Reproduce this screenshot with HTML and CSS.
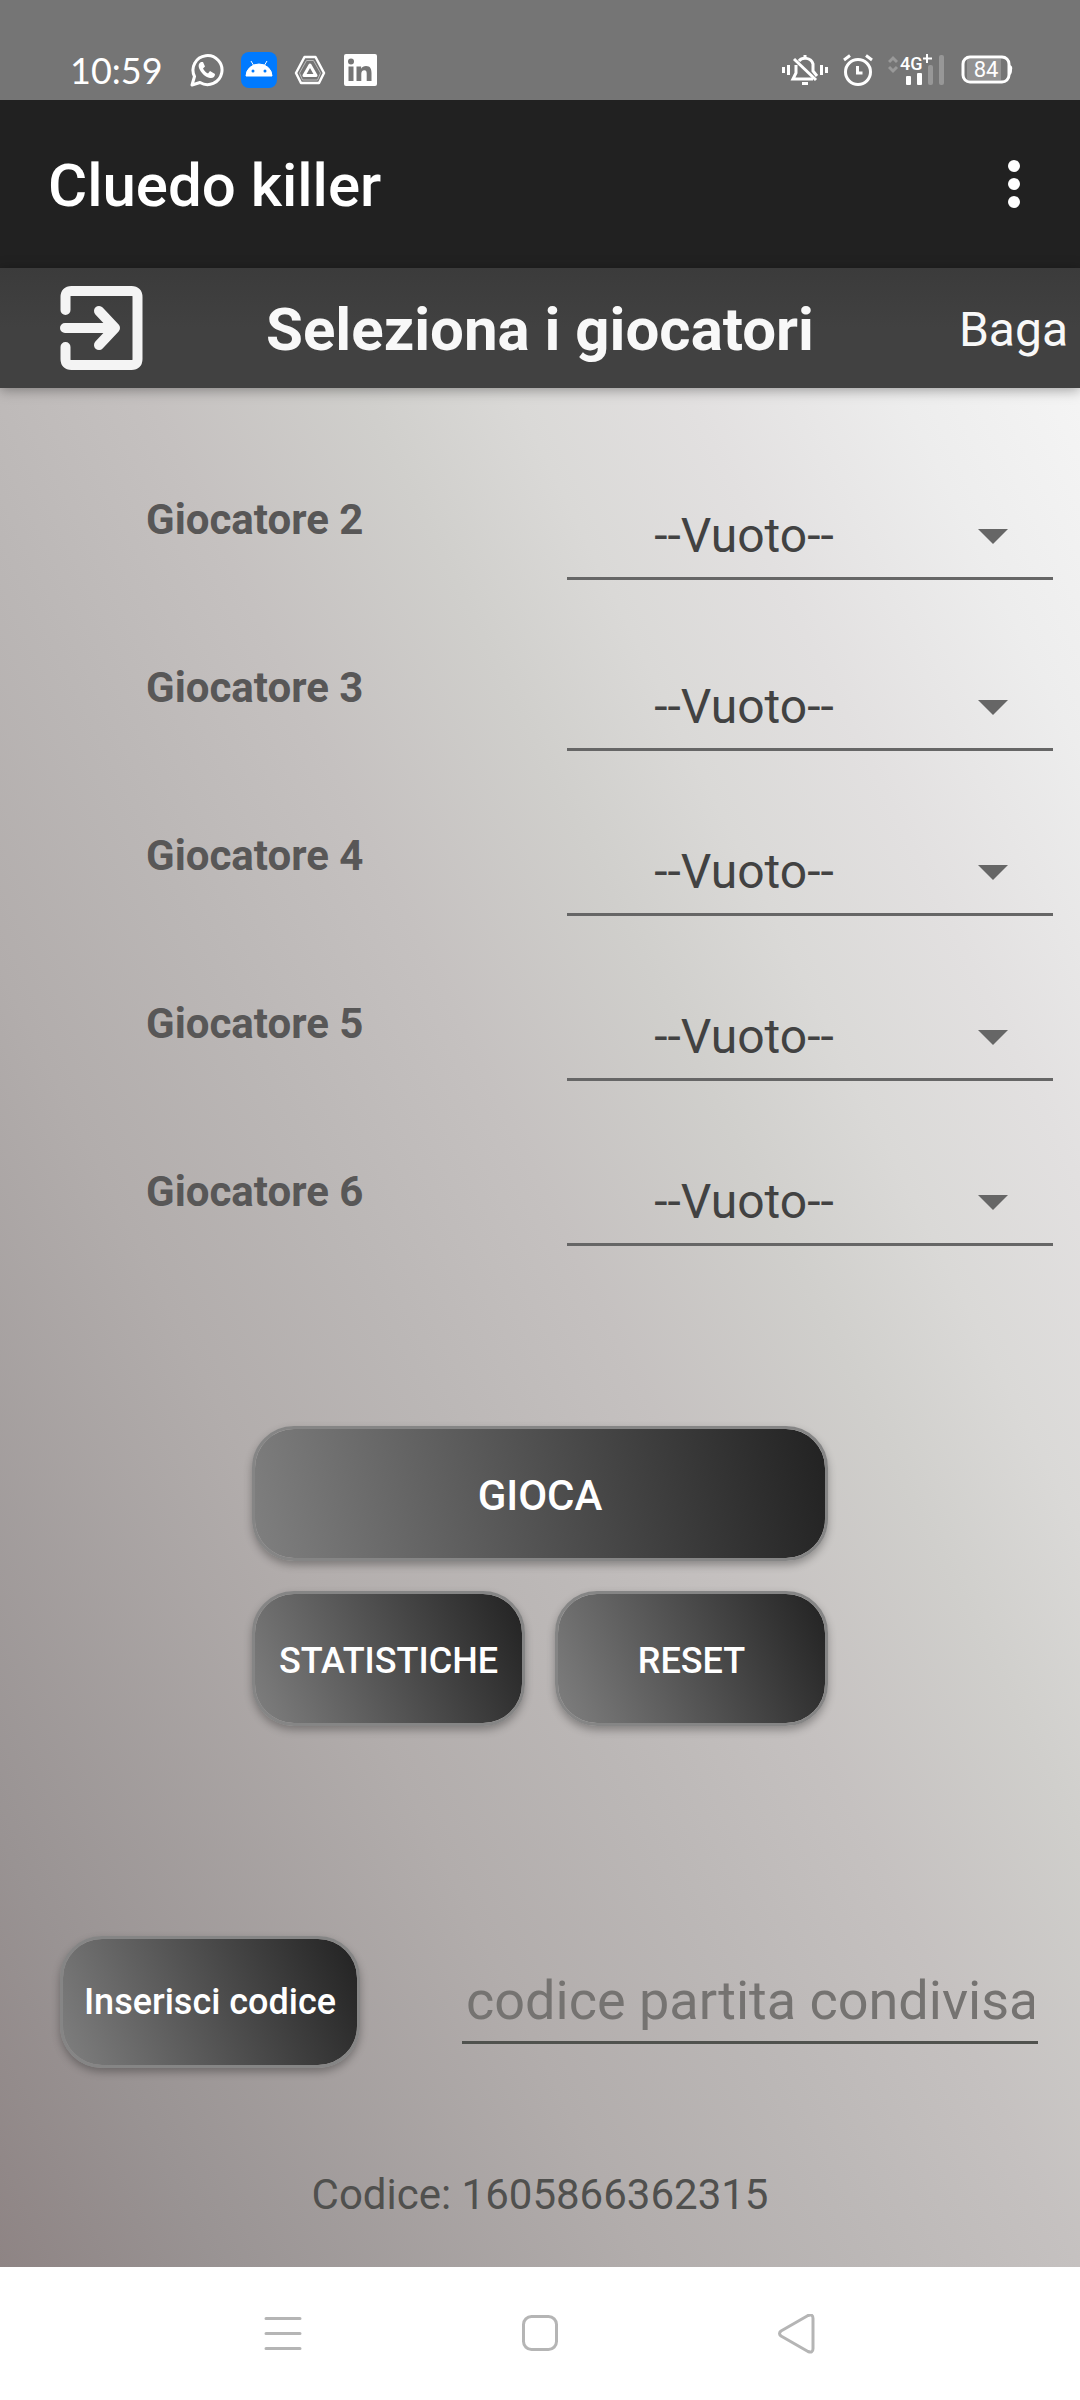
FILE: index.html
```html
<!DOCTYPE html>
<html lang="it">
<head>
<meta charset="utf-8">
<meta name="viewport" content="width=device-width, initial-scale=1">
<title>Cluedo killer</title>
<link rel="stylesheet" href="styles.css">
</head>
<body>
<div class="status">
  <div class="status-group">
    <span class="clock">10:59</span>
    <svg width="34" height="34" viewBox="0 0 34 34" fill="none"><path d="M2 32l2.500-8.500A14.500 14.500 0 1 1 10 29.500z" stroke="#fff" stroke-width="3" stroke-linejoin="round"/><path d="M11 9c-2 1-3 3-2 6 2 5 6 9 11 10 3 .5 5-1 5-4l-5-3-2 2.500c-2-.8-4-3-5-5l2-2-2-4.500z" fill="#fff"/></svg>
    <svg width="36" height="36" viewBox="0 0 36 36"><rect width="36" height="36" rx="8" fill="#007aff"/><path d="M5 24a13 12 0 0 1 26 0zM10 9l3 5M26 9l-3 5" fill="#fff" stroke="#fff" stroke-width="1"/><circle cx="12" cy="19" r="1.500" fill="#007aff"/><circle cx="24" cy="19" r="1.500" fill="#007aff"/></svg>
    <svg width="32" height="30" viewBox="0 0 32 30" fill="none" stroke="#fff" stroke-linejoin="round"><path d="M10.500 2h11L30 18l-5 10H7L2 18z" stroke-width="2.500"/><path d="M16 10l6 10.500H10z" stroke-width="3"/><path d="M12.500 5.500h7L26.500 18l-3 7h-15l-3-7z" stroke="#bbb" stroke-width="1"/></svg>
    <svg width="34" height="34" viewBox="0 0 34 34"><rect x="1" y="1" width="33" height="32" rx="2" fill="#fff"/><g fill="#757575"><circle cx="8" cy="8.500" r="3"/><path d="M5.500 13.500h5V28h-5zM13.500 13.500h4.600v2.200c1-1.700 2.700-2.600 4.900-2.600 4.300 0 5.500 2.800 5.500 7V28h-4.800v-7.200c0-2-.3-3.600-2.400-3.600s-3 1.600-3 3.600V28h-4.800z"/></g></svg>
  </div>
  <div class="status-group status-right">
    <svg width="46" height="32" viewBox="0 0 46 32" fill="none" stroke="#fff" stroke-width="3"><path d="M1.500 13v6M6.500 11v10M39.500 11v10M44.500 13v6"/><path d="M17 7c3-4 12-4 14 3v7l4 5M14 11v8l-3 6h20" /><path d="M12 5l22 21"/><path d="M23 1v3M20 29.500h6"/></svg>
    <svg width="30" height="32" viewBox="0 0 30 32" fill="none" stroke="#fff" stroke-width="3"><circle cx="15" cy="18" r="12.500"/><path d="M1 6l6-4.500M29 6l-6-4.500M14.500 12v7h5"/></svg>
    <svg width="58" height="32" viewBox="0 0 58 32"><path d="M1 8l4-4 4 4M1 13l4 4 4-4" fill="none" stroke="#999" stroke-width="3"/><text x="12" y="16" class="net">4G</text><path d="M39 0v9M35 4.500h9" stroke="#fff" stroke-width="2"/><rect x="18" y="22" width="5" height="9" rx="1" fill="#fff"/><rect x="29" y="19" width="5" height="12" rx="1" fill="#fff"/><rect x="40" y="11" width="5" height="20" rx="2" fill="#979797"/><rect x="51" y="1" width="5" height="30" rx="2" fill="#979797"/></svg>
    <svg width="52" height="30" viewBox="0 0 52 30"><rect x="6" y="4" width="34" height="21" fill="#929292"/><rect x="2" y="2" width="46" height="25" rx="7" fill="none" stroke="#fff" stroke-width="3"/><path d="M49 10q3 1 2 5 0 4-2 5z" fill="#fff"/><text x="25" y="22" text-anchor="middle" class="bat">84</text></svg>
  </div>
</div>
<header class="appbar">
  <h1>Cluedo killer</h1>
  <button class="more" aria-label="Altre opzioni"><svg width="12" height="48" viewBox="0 0 12 48" fill="#fff"><circle cx="6" cy="6" r="6"/><circle cx="6" cy="24" r="6"/><circle cx="6" cy="42" r="6"/></svg></button>
</header>
<nav class="subbar">
  <button class="enter" aria-label="Esci"><svg width="84" height="86" viewBox="0 0 84 86" fill="none" stroke="#f4f4f4" stroke-width="10" stroke-linecap="round" stroke-linejoin="round"><path d="M5.500 25V12q0-6 6-6h60q6 0 6 6v62q0 6-6 6h-60q-6 0-6-6V62M5 43h49M39 26l16 17-16 17"/></svg></button>
  <h2>Seleziona i giocatori</h2>
  <a href="#" class="user">Baga</a>
</nav>
<main class="content">
  <section class="players">
    <div class="labels">
      <label for="p2">Giocatore 2</label>
      <label for="p3">Giocatore 3</label>
      <label for="p4">Giocatore 4</label>
      <label for="p5">Giocatore 5</label>
      <label for="p6">Giocatore 6</label>
    </div>
    <div class="spinners">
      <div class="spinner"><select id="p2"><option>--Vuoto--</option></select></div>
      <div class="spinner"><select id="p3"><option>--Vuoto--</option></select></div>
      <div class="spinner"><select id="p4"><option>--Vuoto--</option></select></div>
      <div class="spinner"><select id="p5"><option>--Vuoto--</option></select></div>
      <div class="spinner"><select id="p6"><option>--Vuoto--</option></select></div>
    </div>
  </section>
  <section class="actions">
    <button class="btn play">GIOCA</button>
    <button class="btn">STATISTICHE</button>
    <button class="btn">RESET</button>
  </section>
  <section class="share">
    <button class="btn insert">Inserisci codice</button>
    <input class="code" type="text" placeholder="codice partita condivisa" aria-label="codice partita condivisa">
  </section>
  <p class="match">Codice: 1605866362315</p>
</main>
<footer class="navbar">
  <button aria-label="Recenti"><svg width="38" height="40" viewBox="0 0 38 40" stroke="#b5b5b5" stroke-width="3" stroke-linecap="round"><path d="M2 4.500h34M2 19.500h34M2 34.500h34"/></svg></button>
  <button aria-label="Home"><svg width="38" height="40" viewBox="0 0 38 40" fill="none" stroke="#b5b5b5" stroke-width="3"><rect x="2.500" y="2.500" width="33" height="33" rx="8"/></svg></button>
  <button aria-label="Indietro"><svg width="38" height="40" viewBox="0 0 38 40" fill="none" stroke="#b5b5b5" stroke-width="3" stroke-linejoin="round"><path d="M3 17L30 1.500q5-2 5 3v30q0 5-5 3L3 22q-3-2.500 0-5z"/></svg></button>
</footer>
</body>
</html>
```

FILE: styles.css
```css
* { box-sizing: border-box; }
body {
  margin: 0;
  min-height: 100vh;
  display: flex;
  flex-direction: column;
  font-family: Roboto, "Liberation Sans", sans-serif;
  background: #fff;
}
button, select, input { font-family: inherit; border: 0; background: none; padding: 0; margin: 0; }
h1, h2, p { margin: 0; }
svg { display: block; flex: none; }

.status {
  height: 100px;
  flex: none;
  padding: 40px 67px 0 70px;
  display: flex;
  justify-content: space-between;
  background: #757575;
  color: #fff;
}
.status-group { height: 60px; display: flex; align-items: center; gap: 17px; }
.status-group { padding-bottom: 1px; }
.status-right { gap: 15px; }
.clock { font: 36px/40px Lato, sans-serif; margin-right: 10px; }
.status { align-items: flex-start; }
.net { font: 500 18px Roboto, sans-serif; fill: #fff; }
.bat { font: 22px Roboto, sans-serif; fill: #fff; }

.appbar {
  height: 168px;
  flex: none;
  padding: 0 60px 0 48px;
  display: flex;
  justify-content: space-between;
  align-items: center;
  background: #212121;
  color: #fff;
}
h1 { padding-top: 4px; font-size: 60px; font-weight: 500; line-height: 70px; }

.subbar {
  height: 120px;
  flex: none;
  padding: 0 12px 0 60px;
  display: grid;
  grid-template-columns: 1fr auto 1fr;
  align-items: center;
  background: linear-gradient(#3b3b3b, #414141 50%);
  color: #f8f8f8;
  box-shadow: 0 2px 12px rgba(0, 0, 0, .35);
  z-index: 1;
}
.enter { justify-self: start; }
h2 { padding-top: 4px; font-size: 60px; font-weight: 700; line-height: 70px; margin-right: 48px; }
.user { padding-top: 4px; justify-self: end; font-size: 48px; line-height: 56px; color: inherit; text-decoration: none; }

.content {
  flex: 1;
  display: flex;
  flex-direction: column;
  background: linear-gradient(to top right, #8e8484 0%, #999393 10%, #b2adac 30%, #bbb7b6 40%, #c5c1c0 50%, #d0cfcc 60%, #dad9d7 67%, #e2e0e0 75%, #ededed 85%, #f5f5f5 94%, #fafafa 100%) bottom / 100% calc(100% + 288px) no-repeat;
}
.players { display: grid; grid-template-columns: 540px 1fr; height: 1038px; padding: 107px 27px 0 0; }
.labels { display: flex; flex-direction: column; gap: 118px; padding-left: 146px; }
.labels label { font-size: 42px; font-weight: 700; line-height: 50px; color: #585757; }
.spinners { display: flex; flex-direction: column; gap: 93px; padding: 13px 0 0 27px; }
.spinner { position: relative; border-bottom: 3px solid #666; }
.spinner:first-child { margin-bottom: 6px; }
.spinner select {
  display: block;
  width: 100%;
  height: 69px;
  padding: 0 132px 14px 0;
  text-align: center;
  text-align-last: center;
  font-size: 48px;
  line-height: 56px;
  color: #424242;
  appearance: none;
}
.spinner::after {
  content: "";
  position: absolute;
  right: 45px;
  top: 21px;
  border: 15px solid transparent;
  border-top-color: #666;
  border-bottom: 0;
  pointer-events: none;
}

.btn {
  height: 132px;
  border: 3px solid #858585;
  border-radius: 42px;
  background: linear-gradient(66deg, #7f7f7f, #222) padding-box;
  box-shadow: 0 4px 8px rgba(0, 0, 0, .3);
  color: #fff;
  font-size: 36px;
  font-weight: 500;
}
.actions { align-self: center; width: 576px; display: grid; grid-template-columns: 1fr 1fr; gap: 30px; }
.actions .btn { height: 135px; padding-top: 4px; }
.actions .play { grid-column: 1 / -1; font-size: 42px; background-image: linear-gradient(78deg, #7f7f7f, #222); }
.share { display: grid; grid-template-columns: 300px 576px; justify-content: space-between; align-items: center; margin-top: 210px; padding: 0 42px 0 60px; }
.code { width: 100%; height: 84px; border-bottom: 3px solid #50524e; padding: 0 4px; font-size: 54px; color: #424242; }
.code::placeholder { color: #757371; opacity: 1; }
.match { margin: 102px 0 40px; text-align: center; font-size: 42px; line-height: 50px; color: #50504e; }

.navbar { height: 133px; flex: none; display: grid; grid-template-columns: 257px 257px 257px; justify-content: center; justify-items: center; align-items: center; background: #fff; }
```
